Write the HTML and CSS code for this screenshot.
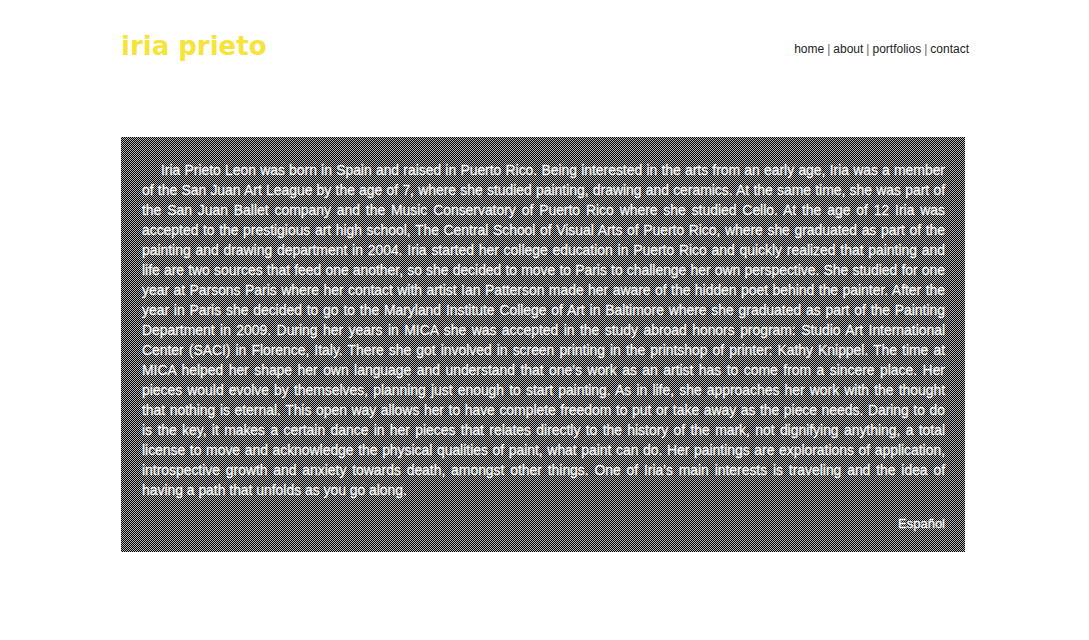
FILE: index.html
```html
<!DOCTYPE html>
<html>
<head>
<meta charset="utf-8">
<link rel="stylesheet" href="styles.css">
</head>
<body>
<div class="page">
  <header class="header">
    <h1 class="logo">iria prieto</h1>
    <nav class="nav">
      <a href="#">home</a><span class="sep">|</span><a href="#">about</a><span class="sep">|</span><a href="#">portfolios</a><span class="sep">|</span><a href="#">contact</a>
    </nav>
  </header>
  <main class="bio">
    <p class="bio-text">Iria Prieto Leon was born in Spain and raised in Puerto Rico. Being interested in the arts from an early age, Iria was a member of the San Juan Art League by the age of 7, where she studied painting, drawing and ceramics. At the same time, she was part of the San Juan Ballet company and the Music Conservatory of Puerto Rico where she studied Cello. At the age of 12 Iria was accepted to the prestigious art high school, The Central School of Visual Arts of Puerto Rico, where she graduated as part of the painting and drawing department in 2004. Iria started her college education in Puerto Rico and quickly realized that painting and life are two sources that feed one another, so she decided to move to Paris to challenge her own perspective. She studied for one year at Parsons Paris where her contact with artist Ian Patterson made her aware of the hidden poet behind the painter. After the year in Paris she decided to go to the Maryland Institute College of Art in Baltimore where she graduated as part of the Painting Department in 2009. During her years in MICA she was accepted in the study abroad honors program: Studio Art International Center (SACI) in Florence, Italy. There she got involved in screen printing in the printshop of printer: Kathy Knippel. The time at MICA helped her shape her own language and understand that one's work as an artist has to come from a sincere place. Her pieces would evolve by themselves, planning just enough to start painting. As in life, she approaches her work with the thought that nothing is eternal. This open way allows her to have complete freedom to put or take away as the piece needs. Daring to do is&nbsp;the key, it makes a certain dance in her pieces that relates directly to the history of the mark, not dignifying anything, a total license to move and acknowledge the physical qualities of paint, what paint can do. Her paintings are explorations of application, introspective growth and anxiety towards death, amongst other things. One of Iria's main interests is traveling and the idea of having a path that unfolds as you go along.</p>
    <p class="lang"><a href="#">Español</a></p>
  </main>
</div>
</body>
</html>
```
FILE: styles.css
```css
html, body {
  margin: 0;
  padding: 0;
  background: #ffffff;
}
.page {
  width: 848px;
  margin-left: 121px;
  font-family: "Liberation Sans", Arial, sans-serif;
}
.header {
  display: flex;
  justify-content: space-between;
  align-items: flex-start;
  height: 137px;
}
.logo {
  margin: 0;
  padding-top: 29px;
  font-family: "DejaVu Sans", Verdana, sans-serif;
  font-weight: bold;
  font-size: 26px;
  line-height: 34px;
  color: #f7e43a;
}
.nav {
  padding-top: 42px;
  font-size: 12px;
  line-height: 15px;
  color: #222;
}
.nav a {
  color: #222;
  text-decoration: none;
}
.sep {
  color: #666;
  margin: 0 3px;
}
.bio {
  width: 844px;
  box-sizing: border-box;
  padding: 23px 20px 18px 21px;
  background: repeating-conic-gradient(#000 0 25%, #b4b4b4 0 50%) 0 0 / 2px 2px;
  color: #fff;
}
.bio-text {
  margin: 0;
  font-size: 13.9px;
  line-height: 20px;
  text-align: justify;
  text-indent: 19px;
  -webkit-text-stroke: 0.35px #fff;
  text-shadow: 0 0 1px #000;
}
.lang {
  margin: 14px 0 0;
  text-align: right;
  font-size: 13px;
  line-height: 20px;
}
.lang a {
  color: #fff;
  text-decoration: none;
  -webkit-text-stroke: 0.35px #fff;
  text-shadow: 0 0 1px #000;
}
```
